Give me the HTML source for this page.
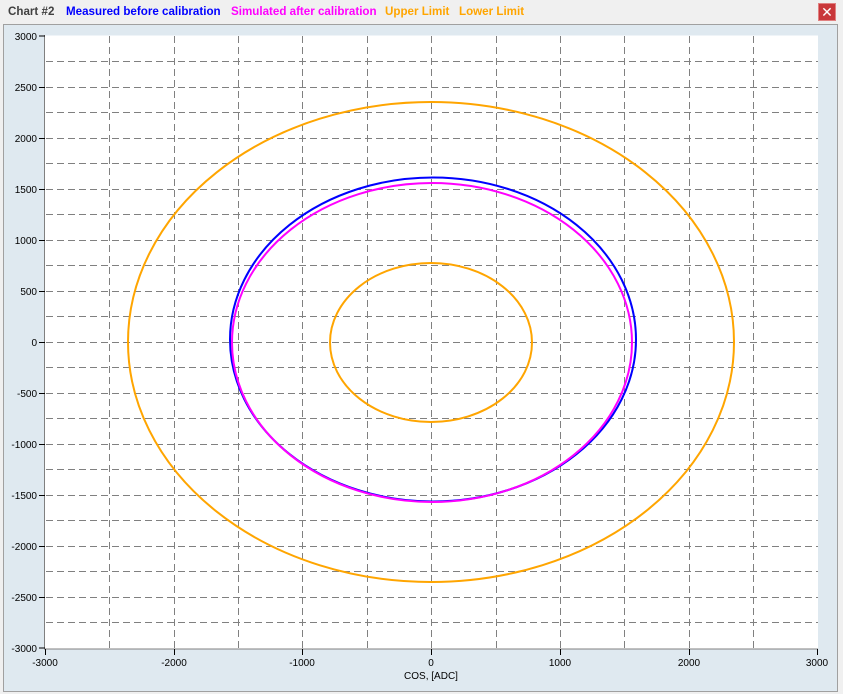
<!DOCTYPE html>
<html><head><style>
body{margin:0;width:843px;height:694px;background:#f0f0f0;font-family:"Liberation Sans",sans-serif;overflow:hidden;position:relative}
.t{position:absolute;top:5px;font-size:11.6px;font-weight:bold;white-space:nowrap}
.panel{position:absolute;left:3px;top:24px;width:833px;height:666px;background:#dfe9f0;border:1px solid #a0a0a0}
.close{position:absolute;left:818px;top:3px;width:18px;height:18px;background:#c9373a;border:1px solid #e08080;box-sizing:border-box;color:#fff;font-size:14px;line-height:16px;text-align:center}
</style></head><body>
<div class="t" style="left:8px;color:#404040">Chart #2</div>
<div class="t" style="left:66px;color:#0000ff">Measured before calibration</div>
<div class="t" style="left:231px;color:#ff00ff">Simulated after calibration</div>
<div class="t" style="left:385px;color:#ffa500">Upper Limit</div>
<div class="t" style="left:459px;color:#ffa500">Lower Limit</div>
<div class="close">✕</div>
<div class="panel"></div>
<svg width="843" height="694" style="position:absolute;left:0;top:0" font-family="Liberation Sans,sans-serif" font-size="10" fill="#000">
<rect x="45" y="35.5" width="773" height="613" fill="#fff"/>
<g stroke="#808080" stroke-dasharray="7,4" stroke-width="1">
<path d="M109.5 36V648M174.5 36V648M238.5 36V648M302.5 36V648M367.5 36V648M431.5 36V648M496.5 36V648M560.5 36V648M624.5 36V648M689.5 36V648M753.5 36V648"/>
<path d="M46 61.5H818M46 87.5H818M46 112.5H818M46 138.5H818M46 163.5H818M46 189.5H818M46 214.5H818M46 240.5H818M46 265.5H818M46 291.5H818M46 316.5H818M46 342.5H818M46 367.5H818M46 393.5H818M46 418.5H818M46 444.5H818M46 469.5H818M46 495.5H818M46 520.5H818M46 546.5H818M46 571.5H818M46 597.5H818M46 622.5H818"/>
</g>
<path d="M44.5 35V649H818" stroke="#808080" fill="none"/>
<g stroke="#000"><path d="M39 36H45M39 87.5H45M39 138.5H45M39 189.5H45M39 240.5H45M39 291.5H45M39 342.5H45M39 393.5H45M39 444.5H45M39 495.5H45M39 546.5H45M39 597.5H45M39 648H45"/>
<path d="M45.5 649V655M174.5 649V655M302.5 649V655M431.5 649V655M560.5 649V655M689.5 649V655M817.5 649V655"/></g>
<g text-anchor="end">
<text x="37" y="40">3000</text><text x="37" y="91">2500</text><text x="37" y="142">2000</text><text x="37" y="193">1500</text><text x="37" y="244">1000</text><text x="37" y="295">500</text><text x="37" y="346">0</text><text x="37" y="397">-500</text><text x="37" y="448">-1000</text><text x="37" y="499">-1500</text><text x="37" y="550">-2000</text><text x="37" y="601">-2500</text><text x="37" y="652">-3000</text></g>
<g text-anchor="middle">
<text x="45" y="666">-3000</text><text x="174" y="666">-2000</text><text x="302" y="666">-1000</text><text x="431" y="666">0</text><text x="560" y="666">1000</text><text x="689" y="666">2000</text><text x="817" y="666">3000</text>
<text x="431" y="679">COS, [ADC]</text></g>
<g fill="none" stroke-width="2">
<ellipse cx="431" cy="342" rx="303" ry="240" stroke="#ffa500"/>
<ellipse cx="431" cy="342.5" rx="101" ry="79.5" stroke="#ffa500"/>
<ellipse cx="433" cy="339.5" rx="203" ry="162" stroke="#0000ff"/>
<ellipse cx="432" cy="342.5" rx="200" ry="159.5" stroke="#ff00ff"/>
</g>
</svg>
</body></html>
